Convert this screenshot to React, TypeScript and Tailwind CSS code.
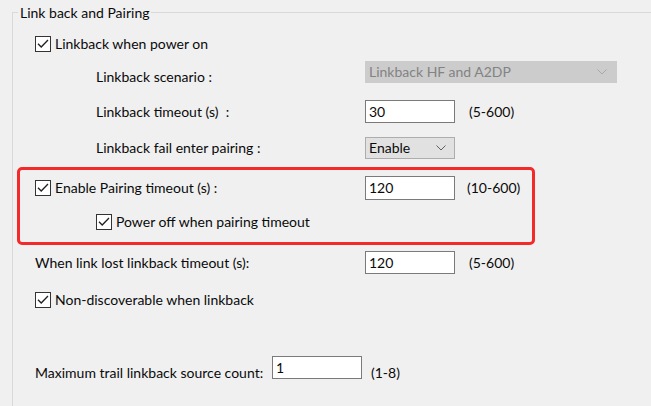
import React from "react";

const Check = () => (
  <svg width="16" height="16" viewBox="0 0 16 16" className="shrink-0 block">
    <rect x="0.5" y="0.5" width="15" height="15" fill="#ffffff" stroke="#333333" strokeWidth="1" />
    <path d="M3 7.8 L6.2 11 L13 4" fill="none" stroke="#1f1f1f" strokeWidth="1.3" />
  </svg>
);

const Chevron = ({ color }: { color: string }) => (
  <svg width="10" height="6" viewBox="0 0 10 6" className="block">
    <path d="M0.5 0.5 L5 5 L9.5 0.5" fill="none" stroke={color} strokeWidth="1" />
  </svg>
);

const Input = ({ value, w = "w-[90px] h-[23px]" }: { value: string; w?: string }) => (
  <div className={`${w} bg-white border border-[#7a7a7a] flex items-center pl-[3px] shrink-0`}>
    {value}
  </div>
);

export default function App() {
  return (
    <div
      className="w-[651px] h-[406px] bg-[#f0f0f0] overflow-hidden text-[14px] text-[#0a0a0a] leading-none whitespace-nowrap"
      style={{ fontFamily: 'Lato, "Noto Sans", sans-serif' }}
    >
      <div className="relative ml-[12px] mt-[12px] h-[420px] border-l border-t border-[#d9d9d9] flex flex-col">
        <div className="absolute left-[5px] top-[-9px] bg-[#f0f0f0] px-[2px] leading-[18px]">Link back and Pairing</div>

        {/* Linkback when power on */}
        <div className="mt-[19px] h-[24px] flex items-center pl-[22px] gap-[4px]">
          <Check />
          <span>Linkback when power on</span>
        </div>

        {/* Scenario */}
        <div className="mt-[5px] h-[22px] flex items-center pl-[83px]">
          <span className="w-[269px] shrink-0 translate-y-[5px]">Linkback scenario :</span>
          <div className="w-[252px] h-[22px] bg-[#cccccc] border border-[#cccccc] flex items-center justify-between pl-[3px] pr-[9px] text-[#838383]">
            <span>Linkback HF and A2DP</span>
            <Chevron color="#a8a8a8" />
          </div>
        </div>

        {/* Linkback timeout */}
        <div className="mt-[17px] h-[23px] flex items-center pl-[83px]">
          <span className="w-[269px] shrink-0">Linkback timeout (s)&nbsp; :</span>
          <Input value="30" />
          <span className="ml-[14px]">(5-600)</span>
        </div>

        {/* Fail enter pairing */}
        <div className="mt-[14px] h-[22px] flex items-center pl-[83px]">
          <span className="w-[269px] shrink-0">Linkback fail enter pairing :</span>
          <div className="w-[90px] h-[22px] bg-[#e1e1e1] border border-[#adadad] flex items-center justify-between pl-[3px] pr-[8px]">
            <span>Enable</span>
            <Chevron color="#606060" />
          </div>
        </div>

        {/* Red highlight */}
        <div className="mt-[8px] ml-[4px] w-[518px] h-[78px] border-[3px] border-[#f42a2a] rounded-[5px] flex flex-col">
          <div className="mt-[6px] h-[24px] flex items-center pl-[15px]">
            <div className="w-[330px] shrink-0 flex items-center gap-[4px]">
              <Check />
              <span>Enable Pairing timeout (s) :</span>
            </div>
            <Input value="120" w="w-[90px] h-[24px]" />
            <span className="ml-[12px]">(10-600)</span>
          </div>
          <div className="mt-[13px] h-[17px] flex items-center pl-[76px] gap-[4px]">
            <Check />
            <span>Power off when pairing timeout</span>
          </div>
        </div>

        {/* When link lost */}
        <div className="mt-[6px] h-[23px] flex items-center pl-[22px]">
          <span className="w-[330px] shrink-0">When link lost linkback timeout (s):</span>
          <Input value="120" />
          <span className="ml-[14px]">(5-600)</span>
        </div>

        {/* Non-discoverable */}
        <div className="mt-[14px] h-[24px] flex items-center pl-[22px] gap-[4px]">
          <Check />
          <span>Non-discoverable when linkback</span>
        </div>

        {/* Max trail */}
        <div className="mt-[44px] h-[23px] flex items-center pl-[22px]">
          <span className="w-[237px] shrink-0 translate-y-[5px]">Maximum trail linkback source count:</span>
          <Input value="1" />
          <span className="ml-[9px] translate-y-[5px]">(1-8)</span>
        </div>
      </div>
    </div>
  );
}
